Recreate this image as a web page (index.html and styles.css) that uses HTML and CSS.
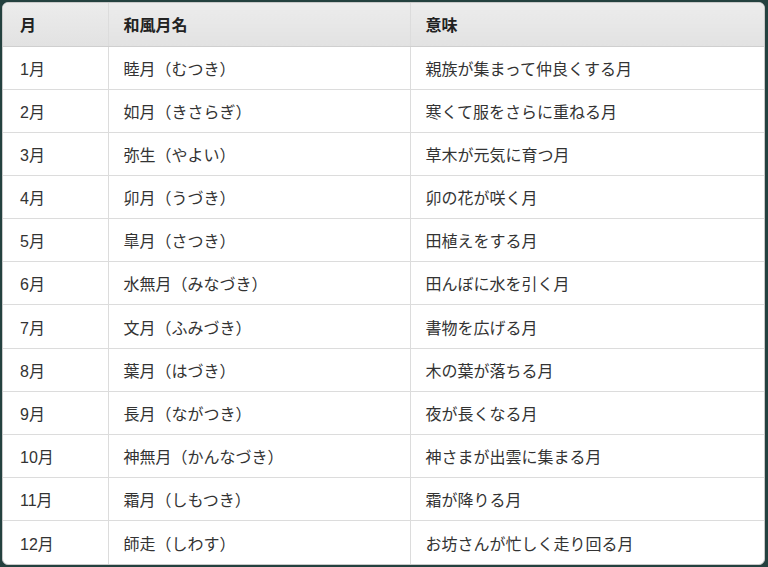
FILE: index.html
```html
<!DOCTYPE html>
<html lang="ja">
<head>
<meta charset="utf-8">
<link rel="stylesheet" href="styles.css">
</head>
<body>
<div class="frame">
  <table class="months">
    <colgroup><col class="c1"><col class="c2"><col class="c3"></colgroup>
    <thead>
      <tr><th>月</th><th>和風月名</th><th>意味</th></tr>
    </thead>
    <tbody>
      <tr><td>1月</td><td>睦月（むつき）</td><td>親族が集まって仲良くする月</td></tr>
      <tr><td>2月</td><td>如月（きさらぎ）</td><td>寒くて服をさらに重ねる月</td></tr>
      <tr><td>3月</td><td>弥生（やよい）</td><td>草木が元気に育つ月</td></tr>
      <tr><td>4月</td><td>卯月（うづき）</td><td>卯の花が咲く月</td></tr>
      <tr><td>5月</td><td>皐月（さつき）</td><td>田植えをする月</td></tr>
      <tr><td>6月</td><td>水無月（みなづき）</td><td>田んぼに水を引く月</td></tr>
      <tr><td>7月</td><td>文月（ふみづき）</td><td>書物を広げる月</td></tr>
      <tr><td>8月</td><td>葉月（はづき）</td><td>木の葉が落ちる月</td></tr>
      <tr><td>9月</td><td>長月（ながつき）</td><td>夜が長くなる月</td></tr>
      <tr><td>10月</td><td>神無月（かんなづき）</td><td>神さまが出雲に集まる月</td></tr>
      <tr><td>11月</td><td>霜月（しもつき）</td><td>霜が降りる月</td></tr>
      <tr><td>12月</td><td>師走（しわす）</td><td>お坊さんが忙しく走り回る月</td></tr>
    </tbody>
  </table>
</div>
</body>
</html>
```
FILE: styles.css
```css
html, body {
  margin: 0;
  padding: 0;
  background: #24413f;
  width: 768px;
  height: 567px;
  overflow: hidden;
}
body {
  padding: 2px 3px 2px 2px;
  box-sizing: border-box;
}
.frame {
  height: 563px;
  background: #fff;
  border: 1px solid #c9c9c9;
  border-radius: 6px;
  overflow: hidden;
  box-sizing: border-box;
}
.months {
  width: 100%;
  height: 100%;
  border-collapse: collapse;
  table-layout: fixed;
  font-family: "Liberation Sans", "Noto Sans CJK JP", sans-serif;
  font-size: 16px;
  color: #333;
}
.months .c1 { width: 105px; }
.months .c2 { width: 302px; }
.months th, .months td {
  box-sizing: border-box;
  text-align: left;
  padding: 0 0 0 15px;
  border-bottom: 1px solid #dcdcdc;
  border-left: 1px solid #dcdcdc;
  vertical-align: middle;
}
.months th:first-child, .months td:first-child {
  border-left: none;
  padding-left: 17px;
}
.months tr:last-child td {
  border-bottom: none;
}
.months thead th {
  height: 43px;
  background: linear-gradient(#ececec, #e2e2e2);
  font-weight: bold;
  color: #222;
  border-bottom-color: #cfcfcf;
}
.months tbody td { height: 42px; }
```
